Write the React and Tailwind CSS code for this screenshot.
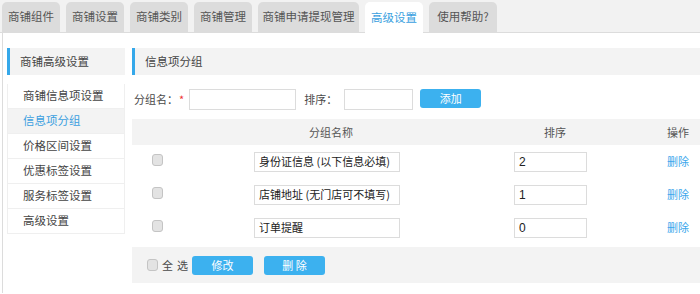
const tabs = ['商铺组件', '商铺设置', '商铺类别', '商铺管理', '商铺申请提现管理', '高级设置', '使用帮助?'];
const tabWidths = ['w-[58px]', 'w-[58px]', 'w-[58px]', 'w-[58px]', 'w-[101px]', 'w-[58px]', 'w-[68px]'];
const menu = ['商铺信息项设置', '信息项分组', '价格区间设置', '优惠标签设置', '服务标签设置', '高级设置'];
const rows = [
  { name: '身份证信息 (以下信息必填)', sort: '2' },
  { name: '店铺地址 (无门店可不填写)', sort: '1' },
  { name: '订单提醒', sort: '0' },
];

function Check() {
  return <span className="inline-block h-[12px] w-[11px] rounded-[3px] border border-[#c4c4c4] bg-[#e3e3e3]" />;
}

function Btn({ children }) {
  return (
    <button className="flex h-[19px] w-[61px] items-center justify-center rounded-[3px] bg-[#3cb1ef] text-[11px] leading-none text-white">
      {children}
    </button>
  );
}

function PanelHead({ children }) {
  return (
    <div className="flex h-[27px] items-center border-l-[3px] border-[#35a8ea] bg-[#f3f3f3] pl-[10px] text-[11.5px] text-[#444]">
      {children}
    </div>
  );
}

export default function App() {
  return (
    <div className="h-[294px] w-[700px] overflow-hidden bg-white text-[11px] text-[#4a4a4a] [font-family:'Noto_Sans_CJK_SC','Liberation_Sans',sans-serif]">
      {/* tab strip */}
      <div className="flex h-[33px] items-end gap-[6px] border-b border-[#dcdcdc] bg-[#f2f2f2] pl-[2px]">
        {tabs.map((t, i) => (
          <div
            key={t}
            className={`${tabWidths[i]} flex h-[30px] items-center justify-center rounded-t-[5px] text-[11.5px] leading-none ${
              i === 5 ? 'mb-[-1px] h-[31px] bg-white text-[#3a9fe0]' : 'bg-[#dcdcdc] text-[#555]'
            }`}
          >
            {t}
          </div>
        ))}
      </div>

      <div className="ml-[2px] flex h-[260px] gap-[7px] border-l border-[#dcdcdc] pl-[4px] pt-[15px]">
        {/* sidebar */}
        <div className="w-[118px] shrink-0">
          <PanelHead>商铺高级设置</PanelHead>
          <div className="pt-[9px]">
            <div className="border-x border-[#efefef]">
              {menu.map((m, i) => (
                <div
                  key={m}
                  className={`flex h-[25px] items-center border-b border-[#efefef] pl-[15px] text-[11.5px] leading-none ${
                    i === 1 ? 'bg-[#f3f3f3] text-[#3a9fe0]' : 'text-[#444]'
                  }`}
                >
                  {m}
                </div>
              ))}
            </div>
          </div>
        </div>

        {/* main */}
        <div className="flex-1">
          <PanelHead>信息项分组</PanelHead>

          <div className="mt-[14px] flex h-[21px] items-center pl-[2px] text-[11px]">
            <span className="leading-none">分组名：</span>
            <span className="ml-[1px] text-[#e33] leading-none">*</span>
            <input className="ml-[5px] h-[21px] w-[107px] border border-[#dcdcdc] outline-none" />
            <span className="ml-[8px] leading-none">排序：</span>
            <input className="ml-[7px] h-[21px] w-[69px] border border-[#dcdcdc] outline-none" />
            <div className="ml-[7px] self-start">
              <Btn>添加</Btn>
            </div>
          </div>

          <div className="mt-[9px]">
            <div className="flex h-[26px] items-center bg-[#f3f3f3] leading-none text-[#555]">
              <div className="w-[118px]" />
              <div className="w-[162px] text-center">分组名称</div>
              <div className="w-[58px]" />
              <div className="w-[170px] text-center">排序</div>
              <div className="flex-1 pr-[11px] text-right">操作</div>
            </div>
            {rows.map((r) => (
              <div key={r.name} className="flex h-[33px] items-center">
                <div className="w-[118px] pl-[20px]">
                  <Check />
                </div>
                <div className="w-[162px] pl-[4px]">
                  <div className="flex h-[20px] w-[146px] items-center whitespace-nowrap border border-[#dcdcdc] pl-[4px] leading-none text-[#222]">
                    {r.name}
                  </div>
                </div>
                <div className="w-[58px]" />
                <div className="w-[170px] pl-[44px]">
                  <div className="flex h-[20px] w-[73px] items-center border border-[#dcdcdc] pl-[4px] text-[12px] leading-none text-[#222] [font-family:'Liberation_Sans',sans-serif]">
                    {r.sort}
                  </div>
                </div>
                <div className="flex-1 pr-[11px] text-right leading-none text-[#3aa7ec]">删除</div>
              </div>
            ))}
          </div>

          <div className="mt-[3px] flex h-[36px] items-center bg-[#f3f3f3] pl-[15px]">
            <Check />
            <span className="ml-[4px] tracking-[4px] leading-none">全选</span>
            <div className="ml-[0px]">
              <Btn>修改</Btn>
            </div>
            <div className="ml-[11px]">
              <Btn>删 除</Btn>
            </div>
          </div>
        </div>
      </div>
    </div>
  );
}
